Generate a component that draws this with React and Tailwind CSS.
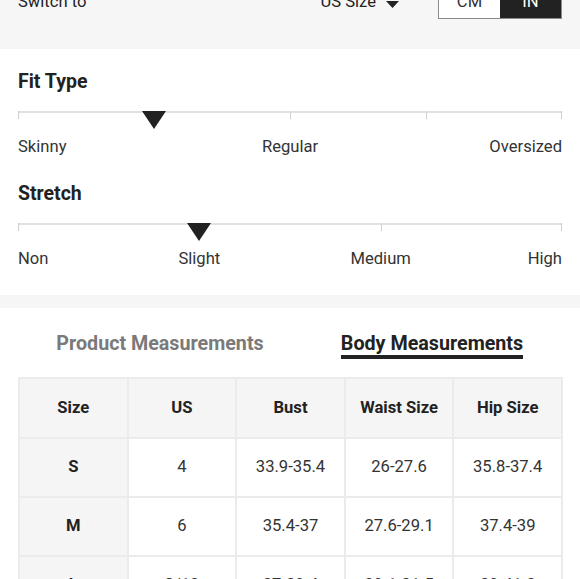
import React from "react";

const font = { fontFamily: "Roboto, 'Noto Sans', Arial, sans-serif" };

const Caret = () => (
  <svg width="13" height="7" viewBox="0 0 13 7" className="mt-[4px]">
    <path d="M0 0h13L6.5 7z" fill="#222" />
  </svg>
);

const Marker = () => (
  <svg width="24" height="18" viewBox="0 0 24 18">
    <path d="M0 0h24L12 18z" fill="#222" />
  </svg>
);

const Scale = ({ title, ticks, marker, labels }) => (
  <div>
    <div className="text-[19.5px] leading-[24px] font-bold text-[#222]">{title}</div>
    <div className="relative mt-[17px] h-[26px]">
      <div className="absolute left-0 right-0 top-0 h-[2px] bg-[#e2e2e2]" />
      {ticks.map((t) => (
        <div
          key={t}
          className="absolute top-0 h-[8px] w-[1px] bg-[#cfcfcf]"
          style={{ left: `calc(${t * 100}% - ${t === 1 ? 1 : 0}px)` }}
        />
      ))}
      <div className="absolute top-0 -translate-x-1/2" style={{ left: `${marker * 100}%` }}>
        <Marker />
      </div>
    </div>
    <div className="relative h-[19px] text-[16.6px] leading-[20px] text-[#333]">
      {labels.map((l, i) => (
        <span
          key={l.text}
          className={
            i === 0
              ? "absolute left-0"
              : i === labels.length - 1
              ? "absolute right-0"
              : "absolute -translate-x-1/2"
          }
          style={i > 0 && i < labels.length - 1 ? { left: `${l.at * 100}%` } : undefined}
        >
          {l.text}
        </span>
      ))}
    </div>
  </div>
);

const rows = [
  ["S", "4", "33.9-35.4", "26-27.6", "35.8-37.4"],
  ["M", "6", "35.4-37", "27.6-29.1", "37.4-39"],
  ["L", "8/10", "37-39.4", "29.1-31.5", "39-41.3"],
  ["XL", "12", "39.4-41.7", "31.5-33.9", "41.3-43.7"],
];

export default function App() {
  return (
    <div className="w-[580px] h-[579px] overflow-hidden bg-white" style={font}>
      {/* switch bar */}
      <div className="-mt-[31px] h-[80px] bg-[#f6f6f6] px-[18px] pt-[16px] flex items-start">
        <div className="h-[34px] flex items-center text-[16.6px] text-[#222]">Switch to</div>
        <div className="ml-auto h-[34px] flex items-center gap-[10px] text-[16.6px] text-[#222]">
          <span>US Size</span>
          <Caret />
        </div>
        <div className="ml-[39px] h-[34px] w-[124px] flex border border-[#8a8a8a] text-[16.6px]">
          <div className="flex-1 flex items-center justify-center bg-white text-[#333]">CM</div>
          <div className="flex-1 flex items-center justify-center bg-[#222] text-white">IN</div>
        </div>
      </div>

      {/* fit & stretch */}
      <div className="px-[18px] pt-[21px] pb-[27px]">
        <Scale
          title="Fit Type"
          ticks={[0, 0.25, 0.5, 0.75, 1]}
          marker={0.25}
          labels={[
            { text: "Skinny", at: 0 },
            { text: "Regular", at: 0.5 },
            { text: "Oversized", at: 1 },
          ]}
        />
        <div className="h-[26px]" />
        <Scale
          title="Stretch"
          ticks={[0, 1 / 3, 2 / 3, 1]}
          marker={1 / 3}
          labels={[
            { text: "Non", at: 0 },
            { text: "Slight", at: 1 / 3 },
            { text: "Medium", at: 2 / 3 },
            { text: "High", at: 1 },
          ]}
        />
      </div>

      <div className="h-[13px] bg-[#f6f6f6]" />

      {/* tabs */}
      <div className="ml-[24px] w-[544px] grid grid-cols-2 pt-[25px] text-[19.7px] leading-[22px] font-bold">
        <div className="flex justify-center">
          <span className="text-[#7a7a7a]">Product Measurements</span>
        </div>
        <div className="flex justify-center">
          <span className="text-[#222] border-b-[4px] border-[#222]">Body Measurements</span>
        </div>
      </div>

      {/* table */}
      <div className="px-[18px] mt-[18px]">
        <table className="w-[545px] border-collapse table-fixed text-[16.6px] text-[#222]">
          <thead>
            <tr className="h-[60px] bg-[#f5f5f5]">
              {["Size", "US", "Bust", "Waist Size", "Hip Size"].map((h) => (
                <th key={h} className="border-2 border-[#ebebeb] font-bold text-center">
                  {h}
                </th>
              ))}
            </tr>
          </thead>
          <tbody>
            {rows.map((r) => (
              <tr key={r[0]} className="h-[59px]">
                {r.map((c, i) => (
                  <td
                    key={i}
                    className={`border-2 border-[#ebebeb] text-center ${
                      i === 0 ? "bg-[#f5f5f5] font-bold" : "bg-white text-[#333]"
                    }`}
                  >
                    {c}
                  </td>
                ))}
              </tr>
            ))}
          </tbody>
        </table>
      </div>
    </div>
  );
}
